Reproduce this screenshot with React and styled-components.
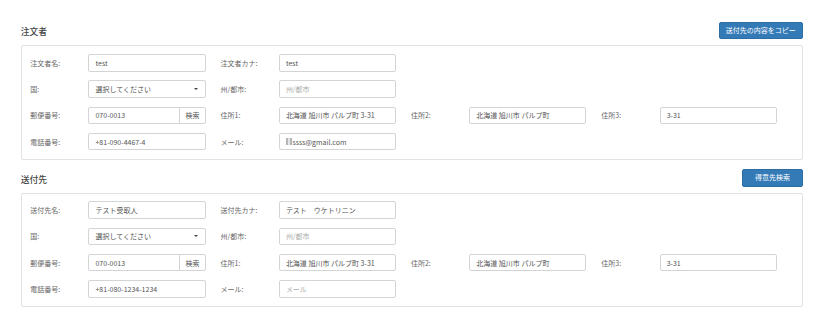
import React from "react";
import styled, { createGlobalStyle } from "styled-components";

const GlobalStyle = createGlobalStyle`
  body {
    margin: 0;
    background: #fff;
    font-family: "Noto Sans CJK JP", "Noto Sans", sans-serif;
    color: #333;
  }
`;

const sections = [
  {
    title: "注文者",
    action: "送付先の内容をコピー",
    pad: 6,
    name: ["注文者名:", "test"],
    kana: ["注文者カナ:", "test"],
    phone: "+81-090-4467-4",
    mail: "ssss@gmail.com",
  },
  {
    title: "送付先",
    action: "得意先検索",
    pad: 11.7,
    name: ["送付先名:", "テスト受取人"],
    kana: ["送付先カナ:", "テスト　ウケトリニン"],
    phone: "+81-080-1234-1234",
    mail: "",
  },
];

const App = () => {
  return (
    <>
      <GlobalStyle />
      <Page>
        {sections.map((s) => (
          <Section key={s.title}>
            <Header>
              <Title>{s.title}</Title>
              <ActionButton $pad={s.pad}>{s.action}</ActionButton>
            </Header>
            <Panel>
              <Row>
                <Field>
                  <Label>{s.name[0]}</Label>
                  <Input>{s.name[1]}</Input>
                </Field>
                <Field>
                  <Label>{s.kana[0]}</Label>
                  <Input>{s.kana[1]}</Input>
                </Field>
              </Row>
              <Row>
                <Field>
                  <Label>国:</Label>
                  <Select>
                    選択してください
                    <Caret />
                  </Select>
                </Field>
                <Field>
                  <Label>州/都市:</Label>
                  <Input $placeholder>州/都市</Input>
                </Field>
              </Row>
              <Row>
                <Field>
                  <Label>郵便番号:</Label>
                  <Group>
                    <GroupInput>070-0013</GroupInput>
                    <GroupButton>検索</GroupButton>
                  </Group>
                </Field>
                <Field>
                  <Label>住所1:</Label>
                  <Input>北海道 旭川市 パルプ町 3-31</Input>
                </Field>
                <Field>
                  <Label>住所2:</Label>
                  <Input>北海道 旭川市 パルプ町</Input>
                </Field>
                <Field>
                  <Label>住所3:</Label>
                  <Input>3-31</Input>
                </Field>
              </Row>
              <Row>
                <Field>
                  <Label>電話番号:</Label>
                  <Input>{s.phone}</Input>
                </Field>
                <Field>
                  <Label>メール:</Label>
                  {s.mail ? (
                    <Input>
                      <Redacted />
                      {s.mail}
                    </Input>
                  ) : (
                    <Input $placeholder>メール</Input>
                  )}
                </Field>
              </Row>
            </Panel>
          </Section>
        ))}
      </Page>
    </>
  );
};

export default App;

const Page = styled.div`
  padding: 21.7px 36px 0 20.7px;
  width: 782px;
  display: flex;
  flex-direction: column;
  gap: 9px;
`;

const Section = styled.section`
  display: flex;
  flex-direction: column;
  gap: 6.2px;
`;

const Header = styled.div`
  display: flex;
  align-items: center;
  justify-content: space-between;
  height: 17.6px;
`;

const Title = styled.h3`
  margin: 0;
  font-size: 8.8px;
  font-weight: 500;
  color: #444;
  padding-top: 3px;
`;

const ActionButton = styled.button`
  height: 17.6px;
  padding: 0 ${(p) => p.$pad}px;
  border: 1px solid #2e6da4;
  border-radius: 2px;
  background: #337ab7;
  color: #fff;
  font-family: inherit;
  font-size: 7px;
  line-height: 1;
`;

const Panel = styled.div`
  border: 1px solid #e2e2e2;
  border-radius: 2px;
  padding: 7.6px 8.5px 8.5px;
  display: flex;
  flex-direction: column;
  gap: 8.8px;
`;

const Row = styled.div`
  display: flex;
  height: 17.5px;
`;

const Field = styled.div`
  display: flex;
  align-items: center;
  width: 190.4px;
  flex: none;
`;

const Label = styled.span`
  width: 58.3px;
  flex: none;
  font-size: 7px;
  color: #666;
`;

const box = `
  height: 17.5px;
  box-sizing: border-box;
  border: 1px solid #d4d4d4;
  border-radius: 2px;
  background: #fff;
  display: flex;
  align-items: center;
  padding: 0 6px;
  font-size: 7px;
  white-space: nowrap;
`;

const Input = styled.div`
  ${box}
  width: 117.2px;
  color: ${(p) => (p.$placeholder ? "#aaa" : "#555")};
`;

const Select = styled.div`
  ${box}
  width: 117.2px;
  color: #555;
  justify-content: space-between;
  padding-right: 7px;
`;

const Caret = styled.span`
  width: 0;
  height: 0;
  border-left: 2.3px solid transparent;
  border-right: 2.3px solid transparent;
  border-top: 2.6px solid #444;
`;

const Group = styled.div`
  display: flex;
  width: 117.2px;
  height: 17.5px;
`;

const GroupInput = styled.div`
  ${box}
  flex: 1;
  color: #555;
  border-radius: 2px 0 0 2px;
`;

const GroupButton = styled.div`
  ${box}
  width: 26.3px;
  justify-content: center;
  padding: 0;
  margin-left: -1px;
  color: #555;
  border-radius: 0 2px 2px 0;
`;

const Redacted = styled.span`
  display: inline-block;
  width: 6px;
  height: 7px;
  margin-right: 0.5px;
  background: repeating-linear-gradient(
    90deg,
    #b5b5b5 0,
    #b5b5b5 0.7px,
    #e4e4e4 0.7px,
    #e4e4e4 1.3px
  );
`;
